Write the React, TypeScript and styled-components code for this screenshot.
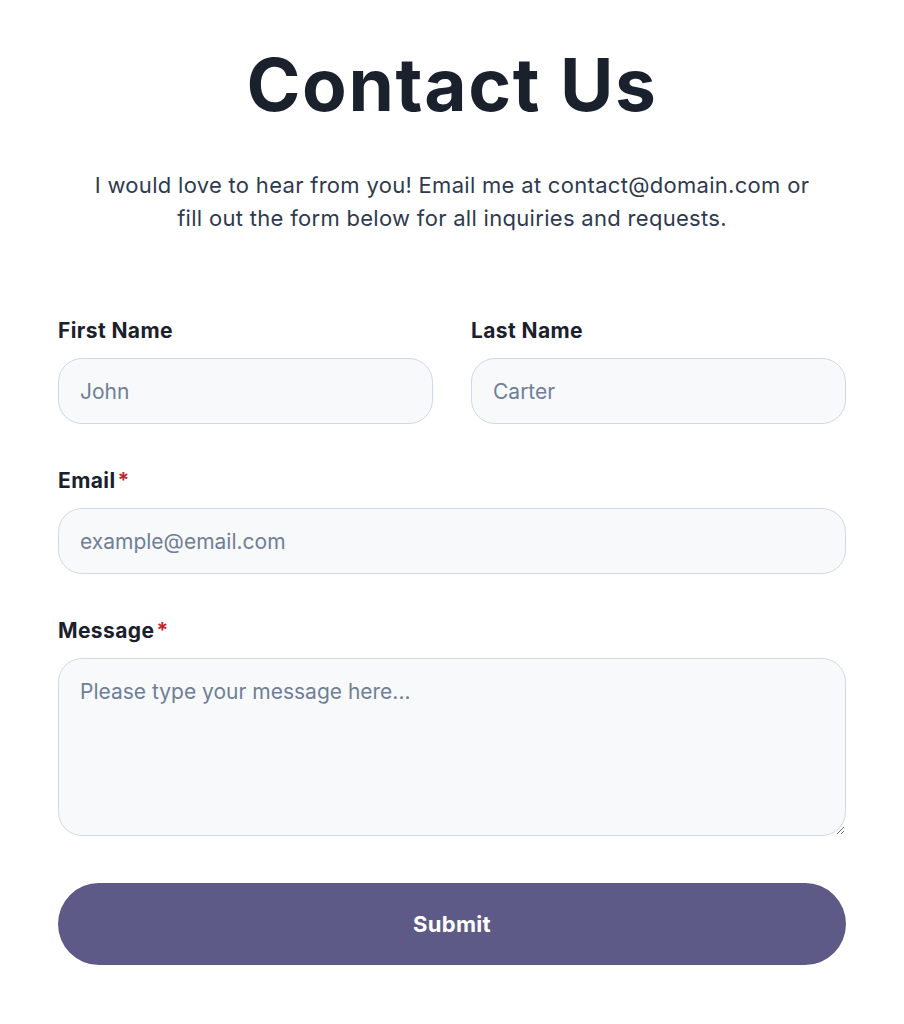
import React from "react";
import styled, { createGlobalStyle } from "styled-components";

const GlobalStyle = createGlobalStyle`
  html, body {
    margin: 0;
    padding: 0;
    background: #ffffff;
  }
  body {
    font-family: "Inter", "Noto Sans", sans-serif;
    color: #1b202d;
  }
  * {
    box-sizing: border-box;
  }
`;

const Page = styled.main`
  width: 904px;
  padding: 40px 58px 40px;
`;

const Title = styled.h1`
  margin: 0;
  text-align: center;
  font-size: 73px;
  line-height: 90px;
  font-weight: 700;
  letter-spacing: 1.6px;
  color: #1b202d;
`;

const Intro = styled.p`
  margin: 39px auto 0;
  max-width: 726px;
  text-align: center;
  font-size: 22px;
  line-height: 33px;
  letter-spacing: 0.3px;
  color: #2e3a4f;
`;

const Form = styled.form`
  margin-top: 84px;
  display: flex;
  flex-direction: column;
  gap: 45px;
`;

const Row = styled.div`
  display: grid;
  grid-template-columns: 1fr 1fr;
  gap: 38px;
`;

const Field = styled.label`
  display: flex;
  flex-direction: column;
  gap: 15px;
`;

const LabelText = styled.span`
  font-size: 21px;
  line-height: 24px;
  font-weight: 700;
  letter-spacing: 0.4px;
  color: #1b202d;
`;

const Required = styled.span`
  color: #c0262d;
  margin-left: 2px;
`;

const Input = styled.input`
  height: 66px;
  width: 100%;
  padding: 0 21px;
  border: 1px solid #cfd9e6;
  border-radius: 24px;
  background: #f8f9fb;
  font-family: inherit;
  font-size: 21px;
  color: #1b202d;
  outline: none;

  &::placeholder {
    color: #6f7f97;
  }
`;

const TextArea = styled.textarea`
  height: 178px;
  width: 100%;
  padding: 19px 21px;
  border: 1px solid #cfd9e6;
  border-radius: 24px;
  background: #f8f9fb;
  font-family: inherit;
  font-size: 21px;
  line-height: 28px;
  color: #1b202d;
  outline: none;
  resize: vertical;

  &::placeholder {
    color: #6f7f97;
  }
`;

const SubmitButton = styled.button`
  margin-top: 2px;
  height: 82px;
  width: 100%;
  border: none;
  border-radius: 41px;
  background: #5d5a88;
  color: #ffffff;
  font-family: inherit;
  font-size: 22px;
  font-weight: 700;
  letter-spacing: 0.3px;
  cursor: pointer;
`;

export default function App() {
  return (
    <>
      <GlobalStyle />
      <Page>
        <Title>Contact Us</Title>
        <Intro>
          I would love to hear from you! Email me at contact@domain.com or
          fill out the form below for all inquiries and requests.
        </Intro>
        <Form onSubmit={(e) => e.preventDefault()}>
          <Row>
            <Field>
              <LabelText>First Name</LabelText>
              <Input placeholder="John" />
            </Field>
            <Field>
              <LabelText>Last Name</LabelText>
              <Input placeholder="Carter" />
            </Field>
          </Row>
          <Field>
            <LabelText>
              Email<Required>*</Required>
            </LabelText>
            <Input type="email" placeholder="example@email.com" />
          </Field>
          <Field>
            <LabelText>
              Message<Required>*</Required>
            </LabelText>
            <TextArea placeholder="Please type your message here..." />
          </Field>
          <SubmitButton type="submit">Submit</SubmitButton>
        </Form>
      </Page>
    </>
  );
}
